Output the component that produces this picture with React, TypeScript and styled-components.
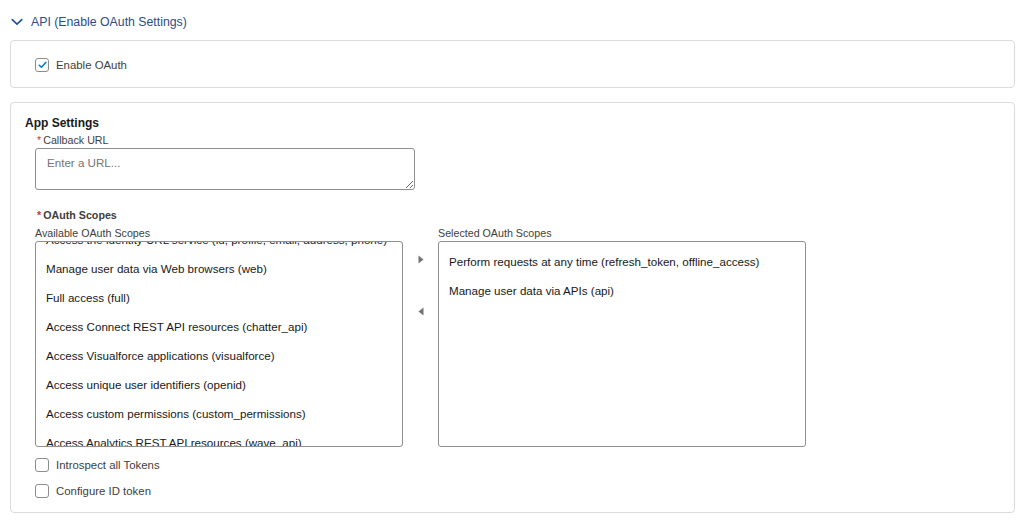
import styled, { createGlobalStyle } from "styled-components";

const GlobalStyle = createGlobalStyle`
   html, body {
      margin: 0;
      padding: 0;
      background: #ffffff;
   }
   body {
      font-family: "Liberation Sans", Arial, sans-serif;
      color: #181818;
   }
`;

const available = [
   "Access the identity URL service (id, profile, email, address, phone)",
   "Manage user data via Web browsers (web)",
   "Full access (full)",
   "Access Connect REST API resources (chatter_api)",
   "Access Visualforce applications (visualforce)",
   "Access unique user identifiers (openid)",
   "Access custom permissions (custom_permissions)",
   "Access Analytics REST API resources (wave_api)",
   "Access Lightning applications (lightning)",
];

const selected = [
   "Perform requests at any time (refresh_token, offline_access)",
   "Manage user data via APIs (api)",
];

function Chevron() {
   return (
      <svg width="12" height="12" viewBox="0 0 12 12">
         <path d="M1.2 3.6 L6 8.2 L10.8 3.6" fill="none" stroke="#1b5297" strokeWidth="1.6" strokeLinecap="round" strokeLinejoin="round" />
      </svg>
   );
}

function Checkbox({ checked }: { checked?: boolean }) {
   return (
      <Box>
         {checked &&
            <svg width="9" height="8" viewBox="0 0 9 8">
               <path d="M1.2 4.3 L3.4 6.3 L7.8 1.4" fill="none" stroke="#0176d3" strokeWidth="1.5" strokeLinecap="round" strokeLinejoin="round" />
            </svg>
         }
      </Box>
   );
}

function Triangle({ dir }: { dir: "left" | "right" }) {
   return (
      <svg width="6" height="9" viewBox="0 0 6 9">
         {dir === "right"
            ? <path d="M0.5 0.5 L5.5 4.5 L0.5 8.5 Z" fill="#747474" />
            : <path d="M5.5 0.5 L0.5 4.5 L5.5 8.5 Z" fill="#747474" />}
      </svg>
   );
}

export default function App() {
   return (
      <>
         <GlobalStyle />
         <Page>
            <SectionHeader>
               <Chevron />
               <SectionTitle>API (Enable OAuth Settings)</SectionTitle>
            </SectionHeader>

            <Card $pad="16px 24px 15px 24px">
               <CheckRow>
                  <Checkbox checked />
                  <CheckLabel>Enable OAuth</CheckLabel>
               </CheckRow>
            </Card>

            <Card $pad="13px 14px 14px 14px" $top={14}>
               <Heading>App Settings</Heading>
               <Indented>
                  <FieldLabel><Req>*</Req>Callback URL</FieldLabel>
                  <UrlInput placeholder="Enter a URL..." />

                  <ScopesTitle><Req>*</Req>OAuth Scopes</ScopesTitle>
                  <DualList>
                     <ListCol>
                        <SmallLabel>Available OAuth Scopes</SmallLabel>
                        <ListBox>
                           <ScrollInner $offset={-17}>
                              {available.map(item => <Option key={item}>{item}</Option>)}
                           </ScrollInner>
                        </ListBox>
                     </ListCol>
                     <Arrows>
                        <Triangle dir="right" />
                        <Triangle dir="left" />
                     </Arrows>
                     <ListCol>
                        <SmallLabel>Selected OAuth Scopes</SmallLabel>
                        <ListBox>
                           <ScrollInner $offset={5}>
                              {selected.map(item => <Option key={item}>{item}</Option>)}
                           </ScrollInner>
                        </ListBox>
                     </ListCol>
                  </DualList>

                  <CheckList>
                     <CheckRow>
                        <Checkbox />
                        <CheckLabel>Introspect all Tokens</CheckLabel>
                     </CheckRow>
                     <CheckRow>
                        <Checkbox />
                        <CheckLabel>Configure ID token</CheckLabel>
                     </CheckRow>
                  </CheckList>
               </Indented>
            </Card>
         </Page>
      </>
   );
}

const Page = styled.div`
   width: 1005px;
   padding: 0 0 0 10px;
`;

const SectionHeader = styled.div`
   display: flex;
   align-items: center;
   gap: 8px;
   height: 40px;
   box-sizing: border-box;
   padding: 4px 0 0 1px;
`;

const SectionTitle = styled.span`
   font-size: 12.3px;
   color: #2e4c85;
`;

const Card = styled.div<{ $pad: string; $top?: number }>`
   border: 1px solid #dddbda;
   border-radius: 4px;
   padding: ${({ $pad }) => $pad};
   margin-top: ${({ $top }) => $top ?? 0}px;
`;

const CheckRow = styled.label`
   display: flex;
   align-items: center;
   gap: 7px;
   height: 15px;
`;

const Box = styled.span`
   width: 14px;
   height: 14px;
   box-sizing: border-box;
   border: 1px solid #8c8c8c;
   border-radius: 3px;
   background: #fff;
   display: flex;
   align-items: center;
   justify-content: center;
`;

const CheckLabel = styled.span`
   font-size: 11.4px;
   color: #3e3e3c;
`;

const Heading = styled.div`
   font-size: 12px;
   font-weight: bold;
   color: #181818;
   line-height: 14px;
`;

const Indented = styled.div`
   padding-left: 10px;
`;

const Req = styled.span`
   color: #c23934;
   margin: 0 2px 0 2px;
`;

const FieldLabel = styled.div`
   font-size: 10.7px;
   color: #3e3e3c;
   line-height: 14px;
   margin-top: 3px;
`;

const UrlInput = styled.textarea`
   display: block;
   width: 380px;
   height: 42px;
   box-sizing: border-box;
   margin-top: 1px;
   padding: 7px 11px;
   border: 1px solid #8f8f8f;
   border-radius: 3px;
   font-family: "Liberation Sans", Arial, sans-serif;
   font-size: 11.6px;
   color: #181818;
   resize: vertical;
   outline: none;
   &::placeholder {
      color: #747474;
   }
`;

const ScopesTitle = styled.div`
   font-size: 10.7px;
   font-weight: bold;
   color: #3e3e3c;
   line-height: 14px;
   margin-top: 18px;
`;

const DualList = styled.div`
   display: flex;
   align-items: flex-start;
   margin-top: 4px;
`;

const ListCol = styled.div`
   display: flex;
   flex-direction: column;
`;

const SmallLabel = styled.div`
   font-size: 10.7px;
   color: #3e3e3c;
   line-height: 14px;
`;

const ListBox = styled.div`
   width: 368px;
   height: 206px;
   box-sizing: border-box;
   border: 1px solid #8f8f8f;
   border-radius: 3px;
   overflow: hidden;
   margin-top: 1px;
`;

const ScrollInner = styled.div<{ $offset: number }>`
   margin-top: ${({ $offset }) => $offset}px;
   display: flex;
   flex-direction: column;
`;

const Option = styled.div`
   height: 29px;
   line-height: 29px;
   padding-left: 10px;
   font-size: 11.6px;
   color: #181818;
   white-space: nowrap;
`;

const Arrows = styled.div`
   width: 35px;
   display: flex;
   flex-direction: column;
   align-items: center;
   gap: 43px;
   padding-top: 29px;
`;

const CheckList = styled.div`
   display: flex;
   flex-direction: column;
   gap: 11px;
   margin-top: 10px;
`;
